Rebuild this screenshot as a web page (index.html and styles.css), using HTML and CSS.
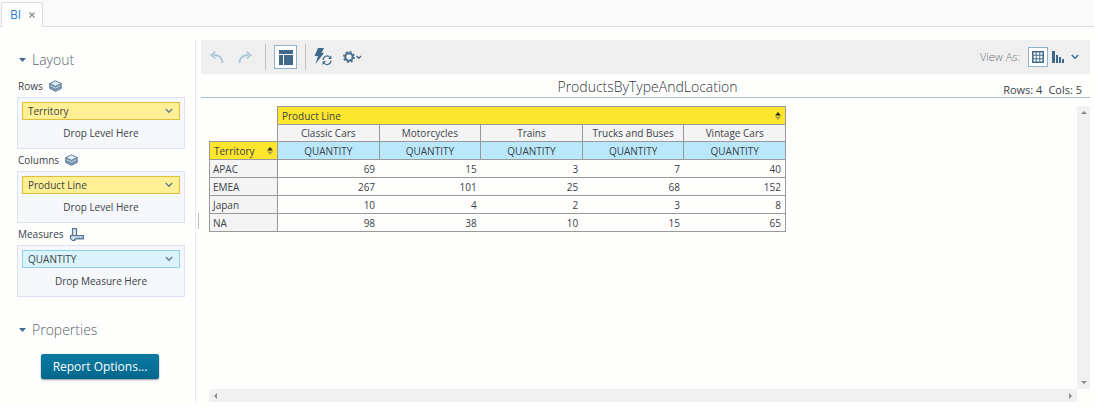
FILE: index.html
```html
<!DOCTYPE html>
<html lang="en">
<head>
<meta charset="utf-8">
<title>BI</title>
<link rel="stylesheet" href="styles.css">
</head>
<body>
<svg class="defs" aria-hidden="true">
  <symbol id="chevron" viewBox="0 0 8 6"><path d="M.8 1 4 4.300 7.200 1" fill="none" stroke="currentColor" stroke-width="1.400"/></symbol>
  <symbol id="layers" viewBox="0 0 13 12"><path d="M6.500.8 12.200 3.500v5l-5.700 2.800L.8 8.500v-5z" fill="#8ca6ba"/><path d="M6.500.8 12.200 3.500 6.500 6.300.8 3.500z" fill="#e4edf3" stroke="currentColor" stroke-width=".9"/><path d="m1 5.800 5.500 2.600L12 5.800" fill="none" stroke="#f2f6f9" stroke-width=".7"/><path d="m1 6.600 5.500 2.600L12 6.600" fill="none" stroke="currentColor" stroke-width=".8"/><path d="M.8 3.500v5l5.700 2.800 5.700-2.800v-5" fill="none" stroke="currentColor"/></symbol>
  <symbol id="sort" viewBox="0 0 6 8"><path d="M0 3.500 3 0l3 3.500z" fill="#2b2b20"/><path d="M0 4.500h6L3 8z" fill="#a99e4a"/></symbol>
</svg>
<div class="app">
  <nav class="tabs">
    <div class="tab"><a class="tab-link" href="#report">BI</a><button class="tab-close" aria-label="Close tab"><svg width="6" height="6" viewBox="0 0 6 6"><path d="M.5.5l5 5M5.500.5l-5 5" stroke="#888" stroke-width="1.100"/></svg></button></div>
  </nav>
  <div class="workspace">
    <aside class="sidebar">
      <h2 class="section"><svg width="7" height="4" viewBox="0 0 7 4"><path d="M0 0h7L3.500 4z" fill="#3f6c8f"/></svg>Layout</h2>
      <h3 class="group">Rows <svg class="group-icon" width="13" height="12"><use href="#layers"/></svg></h3>
      <div class="drop">
        <button class="chip">Territory<svg width="8" height="6"><use href="#chevron"/></svg></button>
        <p class="hint">Drop Level Here</p>
      </div>
      <h3 class="group">Columns <svg class="group-icon" width="13" height="12"><use href="#layers"/></svg></h3>
      <div class="drop">
        <button class="chip">Product Line<svg width="8" height="6"><use href="#chevron"/></svg></button>
        <p class="hint">Drop Level Here</p>
      </div>
      <h3 class="group">Measures <svg class="group-icon" width="14" height="13" viewBox="0 0 14 13" fill="#dfe8ef" stroke="currentColor" stroke-width="1.200"><path d="M2.500.6h4v7h-4z"/><path d="M.6 7.600h12.800v3.200H4.800v1.600H2.400L.6 10.600z"/><path d="M7 9v1.800M9.200 9v1.800M11.400 9v1.800" stroke-width=".8"/></svg></h3>
      <div class="drop">
        <button class="chip chip-measure">QUANTITY<svg width="8" height="6"><use href="#chevron"/></svg></button>
        <p class="hint">Drop Measure Here</p>
      </div>
      <h2 class="section section-properties"><svg width="7" height="4" viewBox="0 0 7 4"><path d="M0 0h7L3.500 4z" fill="#3f6c8f"/></svg>Properties</h2>
      <button class="primary">Report Options...</button>
    </aside>
    <div class="splitter"><span class="grip"></span></div>
    <main class="main" id="report">
      <div class="toolbar">
        <button class="tool tool-off" aria-label="Undo"><svg width="14" height="13" viewBox="0 0 14 13"><path d="M3.500 4C8.500 3.600 12.200 6.500 12.600 12" fill="none" stroke="currentColor" stroke-width="1.900"/><path d="M5.400.6 1.200 4.200 5.400 7.400" fill="none" stroke="currentColor" stroke-width="1.600"/></svg></button>
        <button class="tool tool-off" aria-label="Redo"><svg width="14" height="13" viewBox="0 0 14 13"><path d="M10.500 4C5.500 3.600 1.800 6.500 1.400 12" fill="none" stroke="currentColor" stroke-width="1.900"/><path d="M8.600.6 12.800 4.200 8.600 7.400" fill="none" stroke="currentColor" stroke-width="1.600"/></svg></button>
        <span class="rule"></span>
        <button class="tool tool-on" aria-label="Layout panel"><svg width="14" height="15" viewBox="0 0 14 15" fill="currentColor"><path d="M0 0h14v4H0zM0 5h4v10H0zM5 5h9v10H5z"/></svg></button>
        <span class="rule"></span>
        <button class="tool tool-refresh" aria-label="Auto refresh"><svg width="19" height="18" viewBox="0 0 19 18"><path d="M4 0h6L7.500 5H10L1.500 16 4 8H.5z" fill="currentColor"/><path d="M9.200 12A3.800 3.800 0 0 1 16 9.500M16.800 12.500A3.800 3.800 0 0 1 10 15" fill="none" stroke="currentColor" stroke-width="1.200"/><path d="M17.500 7.500V11H14zM8.600 17v-3.700h3.500z" fill="currentColor"/></svg></button>
        <button class="tool" aria-label="Settings"><svg width="19" height="13" viewBox="0 0 19 13"><circle cx="6" cy="6" r="3.700" fill="none" stroke="currentColor" stroke-width="2"/><circle cx="6" cy="6" r="5.200" fill="none" stroke="currentColor" stroke-width="1.500" stroke-dasharray="2 2.080"/><path d="m13.500 5 2.300 2.300L18 5" fill="none" stroke="currentColor" stroke-width="1.300"/></svg></button>
        <span class="view-label">View As:</span>
        <button class="tool view-on" aria-label="Table"><svg width="12" height="12" viewBox="0 0 12 12" fill="none" stroke="currentColor"><path d="M.8.8h10.400v10.400H.8z" stroke-width="1.500"/><path d="M4.200 1v10M7.800 1v10M1 4.200h10M1 7.800h10"/></svg></button>
        <button class="tool view-chart" aria-label="Chart"><svg width="12" height="12" viewBox="0 0 12 12" fill="currentColor"><path d="M0 0h3v12H0zM4 4h2v8H4zM7 6h2v6H7zM10 8h2v4h-2z"/></svg></button>
        <button class="tool view-more" aria-label="More views"><svg width="8" height="6"><use href="#chevron"/></svg></button>
      </div>
      <header class="report-head">
        <h1 class="report-title">ProductsByTypeAndLocation</h1>
        <p class="counts"><span>Rows: 4</span><span>Cols: 5</span></p>
      </header>
      <div class="canvas">
        <div class="sheet">
          <table class="pivot">
            <colgroup><col class="col-label"><col span="5"></colgroup>
            <thead>
              <tr><td class="empty" rowspan="2"></td><th class="level" colspan="5"><div class="level-in">Product Line<svg width="6" height="8"><use href="#sort"/></svg></div></th></tr>
              <tr class="members"><th>Classic Cars</th><th>Motorcycles</th><th>Trains</th><th>Trucks and Buses</th><th>Vintage Cars</th></tr>
              <tr class="measures"><th class="level"><div class="level-in">Territory<svg width="6" height="8"><use href="#sort"/></svg></div></th><th>QUANTITY</th><th>QUANTITY</th><th>QUANTITY</th><th>QUANTITY</th><th>QUANTITY</th></tr>
            </thead>
            <tbody>
              <tr><th>APAC</th><td>69</td><td>15</td><td>3</td><td>7</td><td>40</td></tr>
              <tr><th>EMEA</th><td>267</td><td>101</td><td>25</td><td>68</td><td>152</td></tr>
              <tr><th>Japan</th><td>10</td><td>4</td><td>2</td><td>3</td><td>8</td></tr>
              <tr><th>NA</th><td>98</td><td>38</td><td>10</td><td>15</td><td>65</td></tr>
            </tbody>
          </table>
        </div>
        <div class="bar bar-v">
          <button class="arrow" aria-label="Scroll up"><svg width="6" height="3" viewBox="0 0 6 3"><path d="M0 3 3 0l3 3z"/></svg></button>
          <button class="arrow" aria-label="Scroll down"><svg width="6" height="3" viewBox="0 0 6 3"><path d="M0 0h6L3 3z"/></svg></button>
        </div>
        <div class="bar bar-h">
          <button class="arrow" aria-label="Scroll left"><svg width="3" height="6" viewBox="0 0 3 6"><path d="M3 0v6L0 3z"/></svg></button>
          <button class="arrow" aria-label="Scroll right"><svg width="3" height="6" viewBox="0 0 3 6"><path d="M0 0v6l3-3z"/></svg></button>
        </div>
      </div>
    </main>
  </div>
</div>
</body>
</html>
```
FILE: styles.css
```css
* { box-sizing: border-box; }
body {
  margin: 0;
  background: #fefefd;
  color: #3b4248;
  font: 10px/14px "Open Sans", "Noto Sans", sans-serif;
}
h1, h2, h3, p { margin: 0; font-weight: 400; }
button {
  margin: 0;
  padding: 0;
  border: 0;
  background: none;
  color: inherit;
  font: inherit;
  cursor: pointer;
}
svg { display: block; flex: none; }
.defs { position: absolute; width: 0; height: 0; }

.app { display: flex; flex-direction: column; min-height: 100vh; }

.tabs {
  display: flex;
  height: 27px;
  padding: 2px 0 0 1px;
  background: #fafafa;
  border-bottom: 1px solid #dedede;
}
.tab {
  display: flex;
  align-items: center;
  gap: 8px;
  height: 25px;
  padding: 0 7px 0 8px;
  background: #fefefd;
  border: 1px solid #dcdcdc;
  border-bottom: 0;
  border-radius: 3px 3px 0 0;
}
.tab-link { color: #2482d0; font-size: 12px; text-decoration: none; }

.workspace { display: flex; flex: 1; padding: 13px 4px 4px 0; }
.sidebar {
  display: flex;
  flex-direction: column;
  width: 196px;
  padding: 10px 10px 0 17px;
  border-right: 1px solid #e4e8f2;
}
.section {
  display: flex;
  align-items: center;
  gap: 6px;
  height: 20px;
  padding-left: 2px;
  margin-bottom: 5px;
  color: #5b656d;
  font-size: 14px;
  font-weight: 300;
}
.section-properties { margin: 23px 0 14px; }
.group {
  display: flex;
  align-items: center;
  gap: 6px;
  height: 22px;
  padding-left: 1px;
  font-size: 10px;
}
.group-icon { color: #55789a; }
.drop {
  height: 52px;
  padding: 4px;
  background: #f5f7fa;
  border: 1px solid #dbe4ee;
}
.chip {
  display: flex;
  align-items: center;
  justify-content: space-between;
  width: 100%;
  height: 18px;
  padding: 0 6px 0 5px;
  background: #fff096;
  border: 1px solid #e0bd3a;
}
.chip-measure { background: #daf4fd; border-color: #8fd2f0; }
.chip svg { color: #657d8c; }
.hint { margin-top: 6px; text-align: center; }
.primary {
  align-self: center;
  height: 25px;
  padding: 0 12px;
  margin-right: 2px;
  border-radius: 2px;
  background: linear-gradient(#0a7ba2, #02668c);
  box-shadow: 0 1px 2px #8c9ba3;
  color: #fff;
  font-size: 12px;
}
.splitter { display: flex; align-items: center; justify-content: center; width: 5px; }
.grip { width: 1px; height: 16px; background: #bbb; }

.main { display: flex; flex: 1; flex-direction: column; min-width: 0; }
.toolbar {
  display: flex;
  align-items: center;
  height: 34px;
  padding: 0 11px 0 8px;
  background: #efefef;
  color: #3f688a;
}
.tool {
  display: flex;
  align-items: center;
  justify-content: center;
  height: 24px;
  min-width: 16px;
  margin-right: 12px;
}
.tool-off { color: #a9c9d8; }
.rule { width: 1px; height: 26px; margin-right: 8px; background: #c4c4c4; }
.tool-on, .view-on {
  width: 23px;
  background: #fff;
  border: 1px solid #8fb0c6;
}
.tool-on { margin-right: 8px; }
.toolbar .tool-refresh { margin-right: 10px; }
.view-label {
  margin: 0 8px 0 auto;
  color: #68737b;
  font-size: 11px;
  font-weight: 300;
}
.toolbar .view-on { width: 20px; height: 20px; margin-right: 4px; }
.toolbar .view-chart { min-width: 12px; margin-right: 7px; }
.toolbar .view-more { min-width: 8px; margin-right: 0; }

.report-head {
  display: grid;
  grid-template-columns: 1fr auto 1fr;
  align-items: end;
  height: 24px;
  padding-right: 8px;
  border-bottom: 1px solid #a3c2d3;
}
.report-title {
  grid-column: 2;
  padding-left: 12px;
  color: #30383e;
  font-size: 14px;
  font-weight: 300;
  line-height: 20px;
}
.counts {
  display: flex;
  justify-content: flex-end;
  gap: 6px;
  font-size: 11px;
}

.canvas {
  display: grid;
  flex: 1;
  grid-template: 1fr 13px / 1fr 13px;
  padding: 8px 0 0 8px;
}
.sheet { min-width: 0; overflow: hidden; }
.bar { display: flex; justify-content: space-between; background: #f1f1f1; }
.bar-v { flex-direction: column; }
.bar-h { grid-column: 1; }
.arrow {
  display: flex;
  align-items: center;
  justify-content: center;
  width: 13px;
  height: 13px;
}
.arrow svg { fill: #8b8b8b; }

.pivot {
  width: 577px;
  table-layout: fixed;
  border-collapse: collapse;
}
.col-label { width: 68px; }
.pivot th, .pivot td {
  height: 18px;
  padding: 0 4px;
  border: 1px solid #999;
  font-weight: 400;
  line-height: 14px;
  text-align: center;
}
.pivot tbody td { border-width: 1px 0; text-align: right; }
.pivot tbody td:last-child { border-right-width: 1px; }
.pivot tbody th { background: #f4f4f4; text-align: left; padding: 0 3px; }
.pivot .members th { height: 17px; background: #f4f4f4; }
.pivot .measures th { background: #bae8fb; }
.pivot .empty { border-top: 0; border-left: 0; }
.pivot .level, .pivot .measures .level { background: #ffe62e; }
.level-in { display: flex; align-items: center; justify-content: space-between; }
```
